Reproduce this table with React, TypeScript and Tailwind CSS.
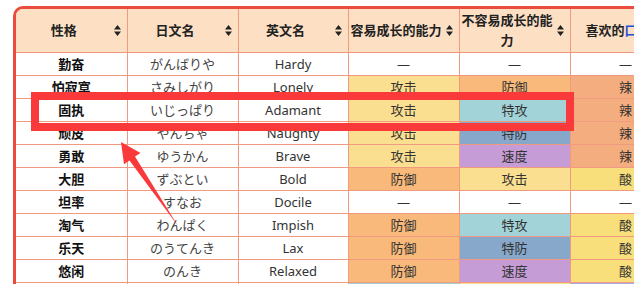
import React from 'react';

type Row = [string, string, string, string, string, string];

const ROWS: Row[] = [
  ['勤奋', 'がんばりや', 'Hardy', '—', '—', '—'],
  ['怕寂寞', 'さみしがり', 'Lonely', '攻击', '防御', '辣'],
  ['固执', 'いじっぱり', 'Adamant', '攻击', '特攻', '辣'],
  ['顽皮', 'やんちゃ', 'Naughty', '攻击', '特防', '辣'],
  ['勇敢', 'ゆうかん', 'Brave', '攻击', '速度', '辣'],
  ['大胆', 'ずぶとい', 'Bold', '防御', '攻击', '酸'],
  ['坦率', 'すなお', 'Docile', '—', '—', '—'],
  ['淘气', 'わんぱく', 'Impish', '防御', '特攻', '酸'],
  ['乐天', 'のうてんき', 'Lax', '防御', '特防', '酸'],
  ['悠闲', 'のんき', 'Relaxed', '防御', '速度', '酸'],
  ['内敛', 'ひかえめ', 'Modest', '特攻', '攻击', '涩'],
];

const CELL_BG: Record<string, string> = {
  '攻击': 'bg-[#f9df8f]',
  '防御': 'bg-[#f8b97a]',
  '特攻': 'bg-[#a2d3d8]',
  '特防': 'bg-[#87a8ca]',
  '速度': 'bg-[#c59cd6]',
  '辣': 'bg-[#f4ad7f]',
  '酸': 'bg-[#f8df7b]',
  '涩': 'bg-[#a3aee6]',
  '—': 'bg-white',
};

const SortIcon = () => (
  <svg width="7" height="11" viewBox="0 0 7 11" className="shrink-0">
    <path d="M3.5 0L7 4.4H0Z M0 6.6H7L3.5 11Z" fill="#222" />
  </svg>
);

const HeadCell = ({ children }: { children: React.ReactNode }) => (
  <th className="h-[43px] p-0 border border-[#f19a82] bg-[#fde0c4] font-bold text-[13px] leading-[20px] text-[#222]">
    <div className="flex items-center gap-[2px] pr-[6px]">
      <span className="flex-1 text-center">{children}</span>
      <SortIcon />
    </div>
  </th>
);

export default function App() {
  return (
    <div className="relative w-[634px] h-[284px] overflow-hidden bg-white font-['Noto_Sans','Noto_Sans_CJK_SC',sans-serif]">
      <div className="ml-[13px] mt-[6px] w-[760px] border-[3px] border-[#e94b3c] rounded-tl-[10px] overflow-hidden">
        <table className="table-fixed border-collapse border-hidden w-[777px]">
          <colgroup>
            <col className="w-[111px]" />
            <col className="w-[111px]" />
            <col className="w-[110px]" />
            <col className="w-[111px]" />
            <col className="w-[111px]" />
            <col className="w-[111px]" />
            <col className="w-[112px]" />
          </colgroup>
          <thead>
            <tr>
              <HeadCell>性格</HeadCell>
              <HeadCell>日文名</HeadCell>
              <HeadCell>英文名</HeadCell>
              <HeadCell>容易成长的能力</HeadCell>
              <HeadCell>不容易成长的能力</HeadCell>
              <HeadCell>
                <span className="whitespace-nowrap">
                  喜欢的<span className="text-[#1d4fd8]">口味</span>
                </span>
              </HeadCell>
              <HeadCell>不喜欢的口味</HeadCell>
            </tr>
          </thead>
          <tbody>
            {ROWS.map((r) => (
              <tr key={r[0]}>
                <td className="h-[23px] p-0 border border-[#f19a82] text-center text-[13px] leading-[20px] font-bold text-[#111]">{r[0]}</td>
                <td className="h-[23px] p-0 border border-[#f19a82] text-center text-[13px] leading-[20px] text-[#444]">{r[1]}</td>
                <td className="h-[23px] p-0 border border-[#f19a82] text-center text-[13px] leading-[20px] text-[#333]">{r[2]}</td>
                {[r[3], r[4], r[5]].map((v, i) => (
                  <td
                    key={i}
                    className={`h-[23px] p-0 border border-[#f19a82] text-center text-[13px] leading-[20px] text-[#333] ${CELL_BG[v]}`}
                  >
                    {v}
                  </td>
                ))}
                <td className="h-[23px] p-0 border border-[#f19a82] bg-white" />
              </tr>
            ))}
          </tbody>
        </table>
      </div>

      {/* annotation: highlight box */}
      <div className="absolute left-[31px] top-[92px] w-[543px] h-[39px] border-[8px] border-[#fa3a3a]" />

      {/* annotation: arrow */}
      <svg className="absolute left-0 top-0" width="634" height="284" viewBox="0 0 634 284">
        <polygon
          points="121,142 140.5,153 135,156.6 178,226 129.5,160.4 124,164.2"
          fill="#fa3a3a"
        />
      </svg>
    </div>
  );
}
